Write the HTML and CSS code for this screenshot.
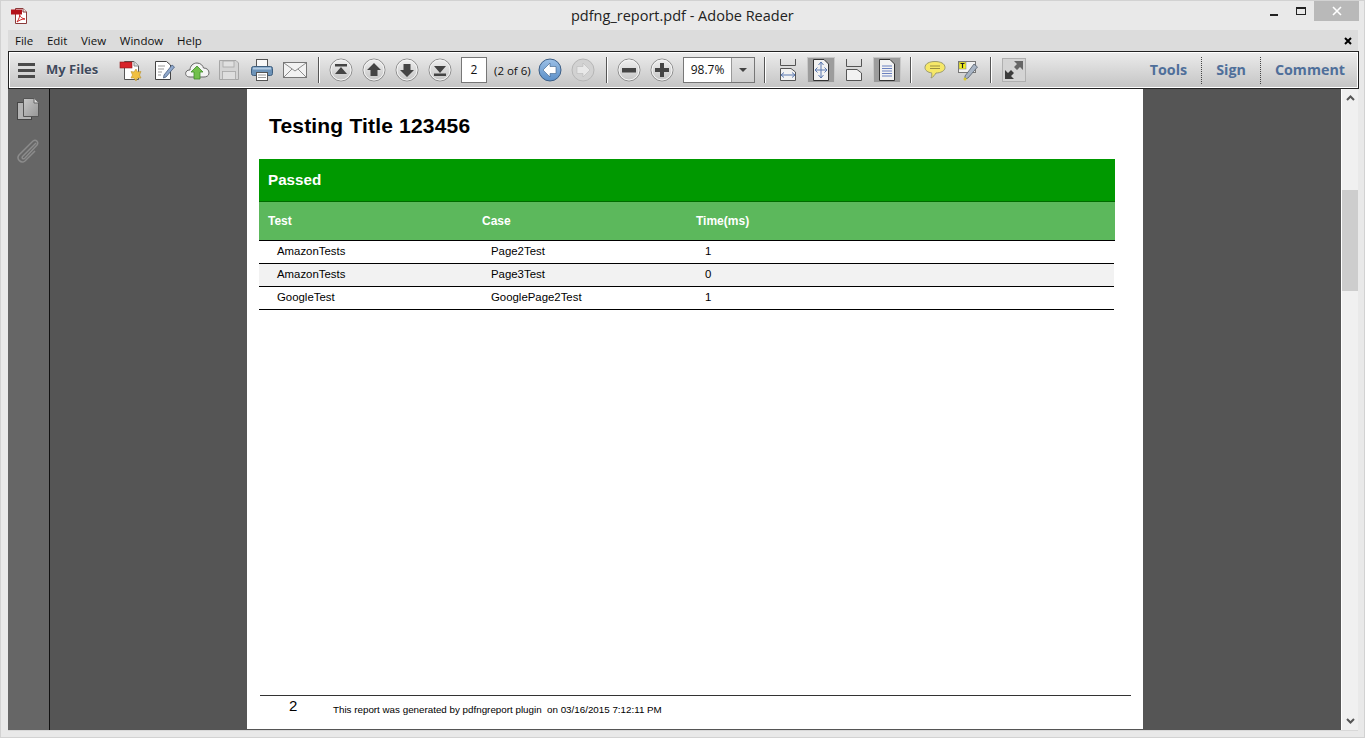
FILE: index.html
```html
<!DOCTYPE html>
<html>
  <head>
    <meta charset="UTF-8" />
    <title>pdfng_report.pdf - Adobe Reader</title>
    <link rel="stylesheet" href="styles.css">
  </head>
  <body>
    <svg class="defs" width="0" height="0">
      <defs>
        <linearGradient id="btn" x1="0" y1="0" x2="0" y2="1">
          <stop offset="0" stop-color="#f0f0f0" />
          <stop offset="1" stop-color="#c4c4c4" />
        </linearGradient>
        <linearGradient id="blue" x1="0" y1="0" x2="0" y2="1">
          <stop offset="0" stop-color="#9cc0e6" />
          <stop offset="1" stop-color="#5b8fc8" />
        </linearGradient>
        <linearGradient id="side" x1="0" y1="0" x2="1" y2="1">
          <stop offset="0" stop-color="#c8c8c8" />
          <stop offset="1" stop-color="#969696" />
        </linearGradient>
        <symbol id="round" viewBox="0 0 24 24">
          <circle cx="12" cy="12" r="11" fill="url(#btn)" stroke="#8e8e8e" />
          <circle cx="12" cy="12" r="10" fill="none" stroke="#f4f4f4" />
        </symbol>
      </defs>
    </svg>

    <header class="titlebar">
      <svg class="app-icon" width="18" height="18" viewBox="0 0 18 18">
        <path d="M5.500 1.500H13L16.500 5V16.500H5.500Z" fill="#fff" stroke="#8a3a3a" />
        <path d="M13 1.500V5H16.500" fill="#eee" stroke="#8a3a3a" />
        <rect x="1" y="2.500" width="11" height="5" fill="#b3121a" />
        <path d="M7 15C9 12 10 9 9.500 7.500C10 10 12 11.500 15 12C12 12 9.500 13 7 15Z" fill="none" stroke="#c22" />
      </svg>
      <div class="title">pdfng_report.pdf - Adobe Reader</div>
      <div class="win-btns">
        <div class="win-btn"><span class="win-min"></span></div>
        <div class="win-btn"><span class="win-max"></span></div>
        <div class="win-btn win-close">
          <svg width="10" height="10" viewBox="0 0 10 10"><path d="M1 1L9 9M9 1L1 9" stroke="#fff" stroke-width="1.600" /></svg>
        </div>
      </div>
    </header>

    <div class="frame">
      <nav class="menubar">
        <span>File</span><span>Edit</span><span>View</span><span>Window</span><span>Help</span>
        <svg class="menu-close" width="8" height="8" viewBox="0 0 8 8"><path d="M1 1L7 7M7 1L1 7" stroke="#000" stroke-width="2" /></svg>
      </nav>

      <div class="toolbar">
        <div class="burger"><i></i><i></i><i></i></div>
        <div class="my-files">My Files</div>

        <div class="tb tb-first">
          <svg width="24" height="24" viewBox="0 0 24 24">
            <path d="M5.500 3.500H15L19.500 8V21.500H5.500Z" fill="#fff" stroke="#555" />
            <path d="M15 3.500V8H19.500" fill="#ddd" stroke="#888" />
            <rect x="1" y="4" width="12" height="6" fill="#d8232a" stroke="#8c1a1a" stroke-width=".6" />
            <path d="M17 11L18.500 14L22 13.500L20.500 17L22 20L18.500 20L17 23L15 20L12 20L13.500 17L12 13.500L15 14Z" fill="#f0c040" stroke="#b8902c" stroke-width=".6" />
          </svg>
        </div>
        <div class="tb">
          <svg width="24" height="24" viewBox="0 0 24 24">
            <path d="M3.500 3.500H14.500L18.500 7V21.500H3.500Z" fill="#fff" stroke="#444" />
            <path d="M6 8H13M6 11H12M6 14H10M6 17H9" stroke="#999" />
            <path d="M12 17L20 7L22.500 9L14 19L11.500 20Z" fill="#8fa8cc" stroke="#4a5f80" stroke-width=".8" />
          </svg>
        </div>
        <div class="tb">
          <svg width="26" height="24" viewBox="0 0 26 24">
            <path d="M6 19C2 19 1 16 2 14C3 12 5 12 6 12C6 8 9 5 13 5C17 5 19 8 19.500 10C23 10 25 12 25 15C25 18 22 19 20 19Z" fill="#f4f4f4" stroke="#666" />
            <path d="M13 8L19 14H16V21H10V14H7Z" fill="#72c04c" stroke="#3f8a28" stroke-width=".8" />
          </svg>
        </div>
        <div class="tb tb-save">
          <svg width="22" height="22" viewBox="0 0 22 22">
            <path d="M1.500 1.500H18L20.500 4V20.500H1.500Z" fill="#d4d4d4" stroke="#a6a6a6" />
            <rect x="5" y="2" width="11" height="6" fill="#e0e0e0" stroke="#a6a6a6" stroke-width=".8" />
            <rect x="4.500" y="12.500" width="13" height="8" fill="#dedede" stroke="#a6a6a6" stroke-width=".8" />
          </svg>
        </div>
        <div class="tb">
          <svg width="24" height="24" viewBox="0 0 24 24">
            <rect x="6.500" y="1.500" width="11" height="7" fill="#f8f8f8" stroke="#555" />
            <rect x="1.500" y="8.500" width="21" height="9" rx="2" fill="#6d93b8" stroke="#3f5f7f" />
            <rect x="3" y="9.500" width="18" height="2" fill="#b4cce2" />
            <rect x="6.500" y="14.500" width="11" height="8" fill="#fff" stroke="#555" />
            <path d="M8 17H16M8 19.500H16" stroke="#999" />
          </svg>
        </div>
        <div class="tb">
          <svg width="24" height="18" viewBox="0 0 24 18">
            <rect x=".5" y="1.500" width="23" height="15" fill="#f2f2f2" stroke="#777" />
            <path d="M1 2L12 10L23 2M1 16L9 8M23 16L15 8" fill="none" stroke="#8c8c8c" />
          </svg>
        </div>
        <div class="sep"></div>

        <div class="tb">
          <svg width="24" height="24" viewBox="0 0 24 24"><use href="#round" /><path d="M6 6H18V8.500H6ZM12 9L18 16H6Z" fill="#444" /></svg>
        </div>
        <div class="tb">
          <svg width="24" height="24" viewBox="0 0 24 24"><use href="#round" /><path d="M12 5L19 12H15.500V18H8.500V12H5Z" fill="#444" /></svg>
        </div>
        <div class="tb">
          <svg width="24" height="24" viewBox="0 0 24 24"><use href="#round" /><path d="M12 19L19 12H15.500V6H8.500V12H5Z" fill="#444" /></svg>
        </div>
        <div class="tb">
          <svg width="24" height="24" viewBox="0 0 24 24"><use href="#round" /><path d="M6 18H18V15.500H6ZM12 15L18 8H6Z" fill="#444" /></svg>
        </div>
        <div class="page-input">2</div>
        <div class="page-count">(2 of 6)</div>
        <div class="tb tb-back">
          <svg width="24" height="24" viewBox="0 0 24 24">
            <circle cx="12" cy="12" r="11" fill="url(#blue)" stroke="#3d5f86" />
            <path d="M5 12L12 5V8.500H18V15.500H12V19Z" fill="#fff" stroke="#3d5f86" stroke-width=".6" />
          </svg>
        </div>
        <div class="tb tb-next">
          <svg width="24" height="24" viewBox="0 0 24 24">
            <circle cx="12" cy="12" r="11" fill="#d2d2d2" stroke="#b6b6b6" />
            <path d="M19 12L12 5V8.500H6V15.500H12V19Z" fill="#e8e8e8" stroke="#bbb" stroke-width=".6" />
          </svg>
        </div>
        <div class="sep"></div>

        <div class="tb">
          <svg width="24" height="24" viewBox="0 0 24 24"><use href="#round" /><rect x="5" y="10" width="14" height="4.500" fill="#444" /></svg>
        </div>
        <div class="tb">
          <svg width="24" height="24" viewBox="0 0 24 24"><use href="#round" /><path d="M10 5H14V10H19V14H14V19H10V14H5V10H10Z" fill="#444" /></svg>
        </div>
        <div class="zoom-box">
          <div class="zoom-value">98.7%</div>
          <div class="zoom-drop"><span></span></div>
        </div>
        <div class="sep sep-zoom"></div>

        <div class="tb">
          <svg width="18" height="24" viewBox="0 0 18 24">
            <path d="M1.500 1V7.500H16.500V1" fill="none" stroke="#555" />
            <path d="M1.500 10.500H12L16.500 14V22.500H1.500Z" fill="#f2f2f2" stroke="#555" />
            <path d="M2 17H16M2 17L5 14.500M2 17L5 19.500M16 17L13 14.500M16 17L13 19.500" fill="none" stroke="#5a78b0" />
          </svg>
        </div>
        <div class="tb tb-on">
          <svg width="18" height="24" viewBox="0 0 18 24">
            <path d="M1.500 1.500H12L16.500 6V22.500H1.500Z" fill="#f2f2f2" stroke="#333" />
            <path d="M9 4V20M3 12H15M9 4L6.500 7M9 4L11.500 7M9 20L6.500 17M9 20L11.500 17M3 12L5.500 9.500M3 12L5.500 14.500M15 12L12.500 9.500M15 12L12.500 14.500" fill="none" stroke="#5a78b0" />
          </svg>
        </div>
        <div class="tb">
          <svg width="18" height="24" viewBox="0 0 18 24">
            <path d="M1.500 1V8.500H16.500V1" fill="none" stroke="#555" />
            <path d="M1.500 11.500H12L16.500 15V22.500H1.500Z" fill="#f2f2f2" stroke="#555" />
          </svg>
        </div>
        <div class="tb tb-on">
          <svg width="18" height="24" viewBox="0 0 18 24">
            <path d="M1.500 1.500H12L16.500 6V22.500H1.500Z" fill="#f2f2f2" stroke="#333" />
            <path d="M4 8H14M4 10.500H14M4 13H14M4 15.500H14M4 18H14" stroke="#6a80c0" />
          </svg>
        </div>
        <div class="sep sep-note"></div>

        <div class="tb">
          <svg width="22" height="20" viewBox="0 0 22 20">
            <path d="M11 1.500C16.500 1.500 21 3.500 21 7.500C21 11 16.500 13 12 13C11 14.500 9.500 17 7 18C8 16 8 14 7.500 12.800C4 12.500 1 10.500 1 7.500C1 3.500 5.500 1.500 11 1.500Z" fill="#f6e868" stroke="#9a9a70" />
            <path d="M6 6H16M6 8.500H16" stroke="#9a8f40" />
          </svg>
        </div>
        <div class="tb">
          <svg width="22" height="22" viewBox="0 0 22 22">
            <rect x="1.500" y="2.500" width="17" height="11" fill="#f2f2f2" stroke="#777" />
            <rect x="2" y="3" width="7" height="7" fill="#f4f020" stroke="#777" stroke-width=".5" />
            <path d="M3.500 4.500H7.500M5.500 4.500V9" stroke="#222" stroke-width="1.200" />
            <path d="M8 17L17 5L20.500 8L11 19L8 20Z" fill="#a8b4c4" stroke="#55606c" stroke-width=".8" />
            <circle cx="8" cy="20" r="1.500" fill="#d8c830" />
          </svg>
        </div>
        <div class="sep sep-last"></div>

        <div class="tb tb-expand">
          <svg width="24" height="24" viewBox="0 0 24 24">
            <rect x=".5" y=".5" width="23" height="23" fill="#d4d4d4" stroke="#b0b0b0" />
            <path d="M12 3H21V12L18 9L15 12L12 9L15 6Z" fill="#666" />
            <path d="M12 21H3V12L6 15L9 12L12 15L9 18Z" fill="#3c3c3c" />
          </svg>
        </div>

        <div class="panes">
          <span class="pane-tools">Tools</span>
          <span class="pane-sign">Sign</span>
          <span class="pane-comment">Comment</span>
        </div>
      </div>

      <div class="workspace">
        <aside class="sidebar">
          <svg width="24" height="24" viewBox="0 0 24 24">
            <rect x="1.500" y="5.500" width="14" height="17" fill="#b4b4b4" stroke="#454545" />
            <path d="M7.500 1.500H18L22.500 6V19.500H7.500Z" fill="url(#side)" stroke="#555" />
            <path d="M18 1.500V6H22.500" fill="#ddd" stroke="#666" />
          </svg>
          <svg class="clip" width="24" height="26" viewBox="0 0 24 26">
            <path d="M20 5L7 18C5 20 7 22 9 20L21 7C23 4 20 1 17 3L3 17C0 21 5 26 9 23L19 13" fill="none" stroke="#8c8c8c" stroke-width="1.500" />
          </svg>
        </aside>

        <main class="viewer">
          <article class="page">
            <div class="page-body">
              <h1 class="report-title">Testing Title 123456</h1>
              <section class="report">
                <h2 class="band">Passed</h2>
                <div class="row head">
                  <div>Test</div><div>Case</div><div>Time(ms)</div>
                </div>
                <div class="row item">
                  <div>AmazonTests</div><div>Page2Test</div><div>1</div>
                </div>
                <div class="row item alt">
                  <div>AmazonTests</div><div>Page3Test</div><div>0</div>
                </div>
                <div class="row item">
                  <div>GoogleTest</div><div>GooglePage2Test</div><div>1</div>
                </div>
              </section>
            </div>
            <footer class="page-foot">
              <span class="foot-num">2</span>
              <span class="foot-text">This report was generated by pdfngreport plugin&nbsp; on 03/16/2015 7:12:11 PM</span>
            </footer>
          </article>
        </main>

        <div class="scrollbar">
          <svg width="9" height="6" viewBox="0 0 9 6"><path d="M1 5L4.500 1.500L8 5" fill="none" stroke="#555" stroke-width="2" /></svg>
          <div class="track"><div class="thumb"></div></div>
          <svg width="9" height="6" viewBox="0 0 9 6"><path d="M1 1L4.500 4.500L8 1" fill="none" stroke="#555" stroke-width="2" /></svg>
        </div>
      </div>
    </div>
  </body>
</html>
```

FILE: styles.css
```css
html, body {
  margin: 0;
  height: 738px;
  overflow: hidden;
}
body {
  font-family: "Open Sans", "Noto Sans", sans-serif;
  color: #111;
  background-color: #e9e9e9;
  box-sizing: border-box;
  border: 1px solid #d2d2d2;
}
.defs {
  position: absolute;
}

/* title bar */
.titlebar {
  display: flex;
  height: 29px;
  position: relative;
  align-items: flex-start;
}
.app-icon {
  margin: 6px 0 0 9px;
}
.title {
  position: absolute;
  left: 570px;
  top: 4px;
  font-size: 14.5px;
  line-height: 21px;
  color: #222;
  white-space: nowrap;
}
.win-btns {
  display: flex;
  margin-left: auto;
  margin-right: 5px;
}
.win-btn {
  width: 27px;
  height: 20px;
  display: flex;
  align-items: center;
  justify-content: center;
}
.win-close {
  width: 45px;
  background: #b9b9b9;
}
.win-min {
  width: 8px;
  height: 2px;
  background: #222;
  margin-top: 7px;
}
.win-max {
  width: 8px;
  height: 5px;
  border: 1px solid #222;
  border-top-width: 2px;
}

.frame {
  margin-left: 7px;
  margin-right: 6px;
}

/* menu */
.menubar {
  display: flex;
  align-items: center;
  height: 21px;
  background: #dcdcdc;
  font-size: 11.5px;
  padding-left: 7px;
  gap: 13.7px;
}
.menu-close {
  margin-left: auto;
  margin-right: 6px;
}

/* toolbar */
.toolbar {
  display: flex;
  align-items: center;
  height: 36px;
  border: 1px solid #222;
  box-shadow: inset 0 0 0 1px #fff;
  background: linear-gradient(#ececec, #c4c4c4);
  margin-right: -1px;
  padding-left: 9px;
}
.burger {
  display: flex;
  flex-direction: column;
  gap: 3px;
  width: 17px;
}
.burger i {
  display: block;
  height: 3px;
  background: #4a4a4a;
}
.my-files {
  margin: 0 0 2px 11px;
  width: 52px;
  font-size: 13px;
  font-weight: 700;
  color: #3f4a5c;
  text-shadow: 0 1px 0 rgba(255, 255, 255, .6);
  white-space: nowrap;
}
.tb {
  width: 33px;
  height: 27px;
  display: flex;
  align-items: center;
  justify-content: center;
  flex: none;
}
.tb-first {
  margin-left: 16px;
}
.tb-save {
  margin-left: -1px;
}
.tb-on {
  background: #9c9c9c;
  box-shadow: inset 0 0 0 1px #c8c8c8;
  width: 28px;
  height: 26px;
  margin: 0 2.500px;
}
.tb-back {
  margin-left: 2px;
}
.sep {
  width: 1px;
  height: 26px;
  background: #555;
  box-shadow: 1px 0 0 #fff;
  margin: 0 5px 0 7px;
  flex: none;
}
.sep-zoom {
  margin: 0 6px 0 9px;
}
.sep-note {
  margin: 0 7px;
}
.sep-last {
  margin: 0 6px;
}
.page-input {
  width: 24px;
  height: 24px;
  margin-left: 5px;
  background: #fff;
  border: 1px solid #777;
  text-align: center;
  font-size: 12px;
  line-height: 24px;
  flex: none;
}
.page-count {
  margin-left: 7px;
  width: 37px;
  font-size: 11.5px;
  white-space: nowrap;
  flex: none;
}
.zoom-box {
  display: flex;
  height: 24px;
  margin-left: 5px;
  border: 1px solid #777;
  flex: none;
}
.zoom-value {
  width: 47px;
  background: #fff;
  text-align: center;
  font-size: 12px;
  line-height: 24px;
}
.zoom-drop {
  width: 22px;
  border-left: 1px solid #999;
  display: flex;
  align-items: center;
  justify-content: center;
  background: linear-gradient(#e4e4e4, #cfcfcf);
}
.zoom-drop span {
  border-left: 4px solid transparent;
  border-right: 4px solid transparent;
  border-top: 4px solid #444;
}
.panes {
  margin-left: auto;
  display: flex;
  align-items: stretch;
  height: 27px;
  font-size: 14.300px;
  font-weight: 700;
  color: #4f6f9a;
  padding-right: 13px;
}
.panes span {
  line-height: 25px;
}
.pane-sign, .pane-comment {
  border-left: 1px dotted #444;
  margin-left: 14px;
  padding-left: 14px;
}

/* workspace */
.workspace {
  display: flex;
  height: 641px;
  border-bottom: 1px solid #d8d8d8;
}
.sidebar {
  width: 42px;
  background: #666;
  border-right: 1px solid #111;
  display: flex;
  flex-direction: column;
  align-items: center;
  padding: 8px 1px 0 0;
  box-sizing: border-box;
  flex: none;
}
.clip {
  margin-top: 17px;
}
.viewer {
  flex: 1;
  background: #555;
  display: flex;
  justify-content: center;
  padding-right: 1px;
}
.page {
  width: 896px;
  height: 640px;
  background: #fff;
  display: flex;
  flex-direction: column;
  font-family: "Liberation Sans", Arial, sans-serif;
  color: #000;
}
.page-body {
  flex: 1;
  padding: 0 28px 0 12px;
}
.report-title {
  margin: 0;
  padding: 24px 0 0 10px;
  font-size: 21px;
  letter-spacing: .18px;
  line-height: 26px;
  height: 46px;
}
.band {
  margin: 0;
  height: 42px;
  line-height: 42px;
  padding-left: 9px;
  background: #009900;
  border-bottom: 1px solid #006b00;
  color: #fff;
  font-size: 15.200px;
}
.row {
  display: grid;
  grid-template-columns: 214px 214px 1fr;
  border-bottom: 1px solid #000;
}
.head {
  height: 38px;
  line-height: 38px;
  padding-left: 9px;
  background: #5cb85c;
  color: #fff;
  font-size: 12px;
  font-weight: 700;
}
.item {
  height: 22px;
  line-height: 21px;
  padding-left: 18px;
  font-size: 11.400px;
  margin-right: 1px;
}
.alt {
  background: #f2f2f2;
}
.page-foot {
  margin: 0 12px 0 13px;
  height: 33px;
  border-top: 1px solid #333;
  display: flex;
  align-items: center;
}
.foot-num {
  margin-left: 29px;
  width: 44px;
  font-size: 15px;
  position: relative;
  top: -7px;
}
.foot-text {
  font-size: 9.800px;
  white-space: nowrap;
  position: relative;
  top: -3px;
}

/* scrollbar */
.scrollbar {
  width: 17px;
  background: #f0f0f0;
  border-left: 1px solid #fff;
  display: flex;
  flex-direction: column;
  align-items: center;
  padding: 6px 0 6px;
  box-sizing: border-box;
  flex: none;
}
.track {
  flex: 1;
  width: 100%;
  padding-top: 89px;
}
.thumb {
  height: 101px;
  background: #cdcdcd;
}
```
